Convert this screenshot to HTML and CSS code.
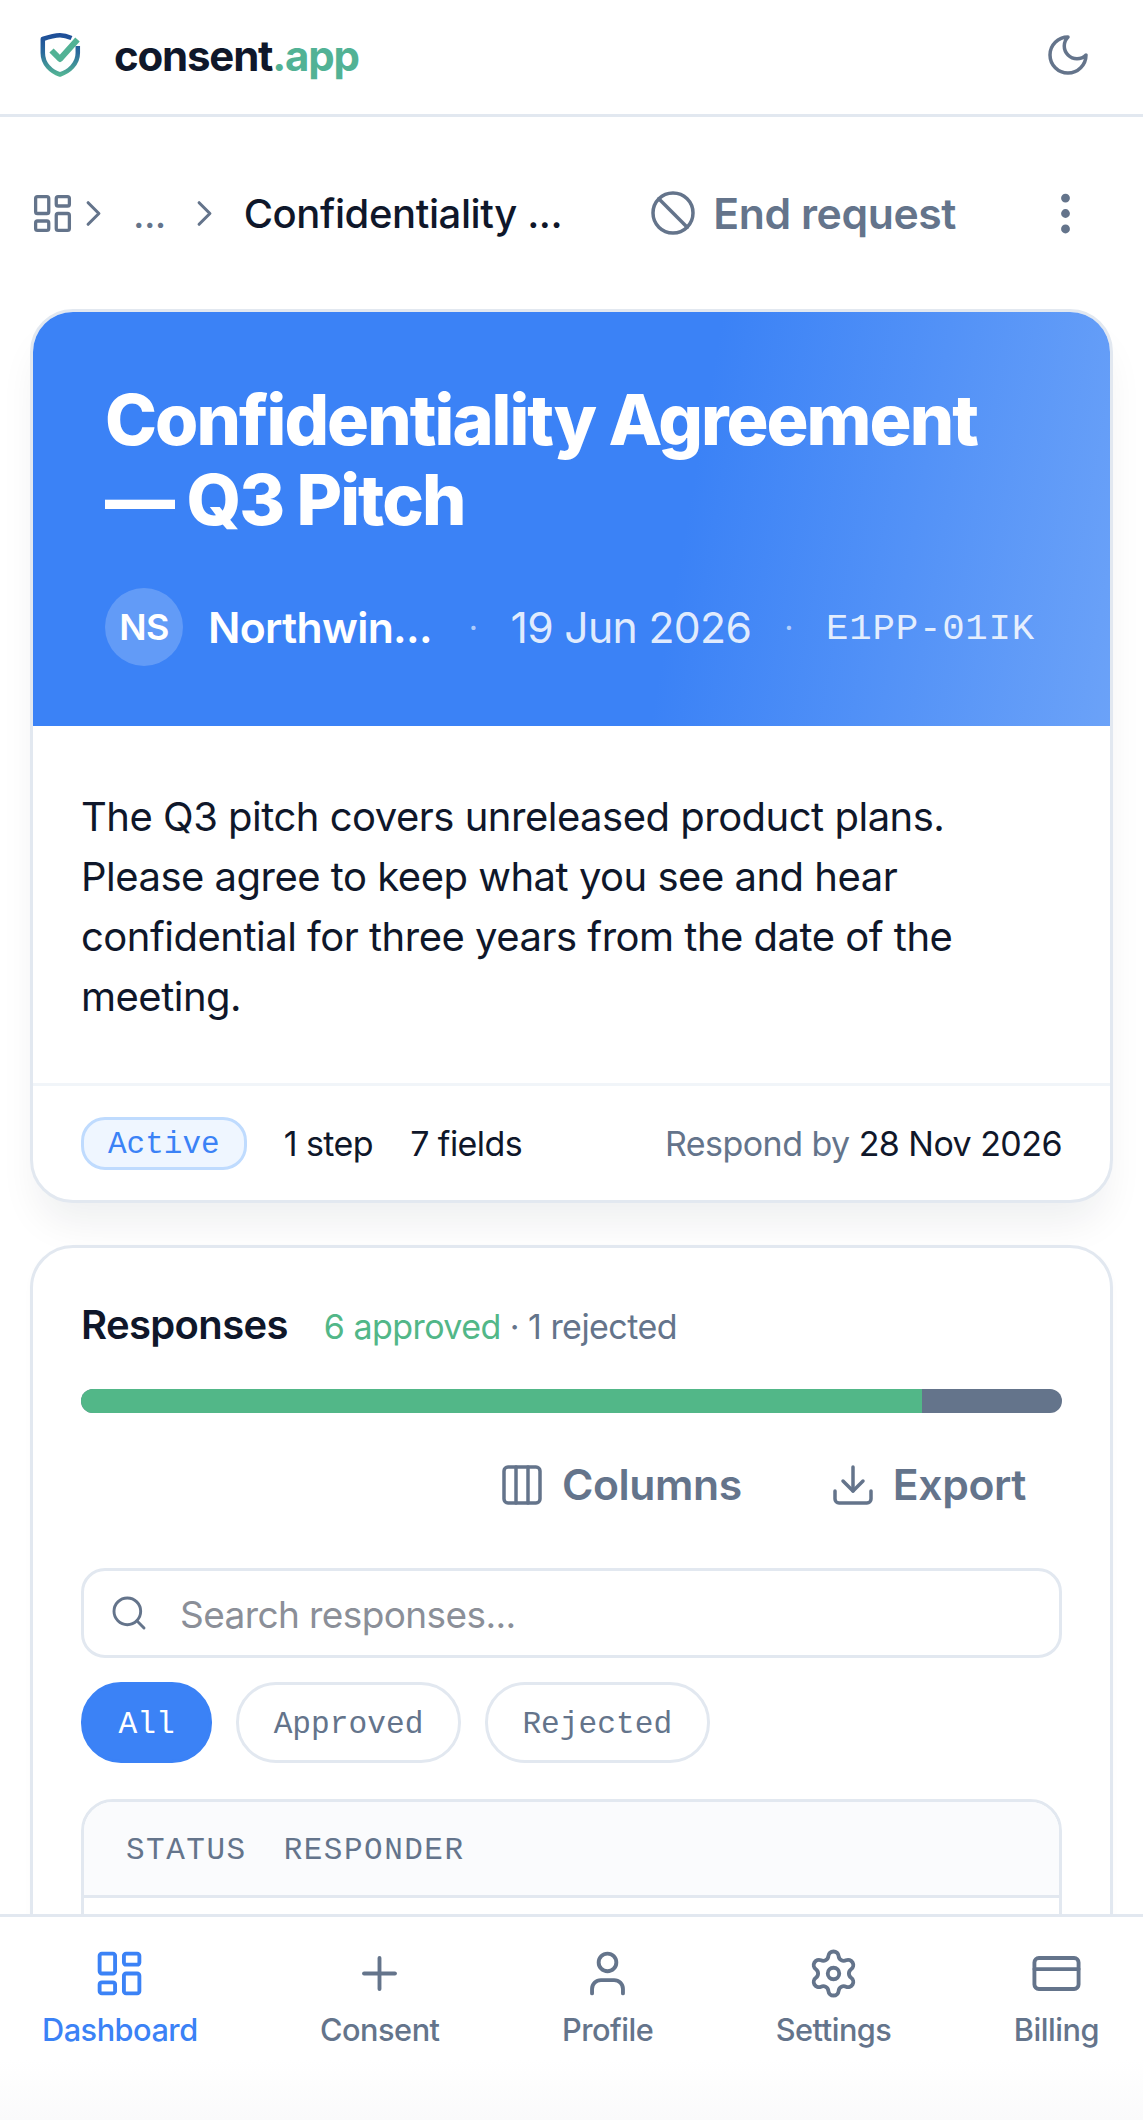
FILE: index.html
```html
<!DOCTYPE html>
<html lang="en">

<head>
  <meta charset="UTF-8">
  <meta name="viewport" content="width=device-width, initial-scale=1.0">
  <title>Confidentiality Agreement — Q3 Pitch</title>
  <link rel="stylesheet" href="styles.css">
</head>

<body>
  <header class="topbar">
    <div class="brand">
      <svg class="brand-logo" viewBox="0 0 48 48" fill="none">
        <defs>
          <linearGradient id="shield" x1="0" y1="0" x2="0" y2="1">
            <stop offset="0" stop-color="#1e4e98" />
            <stop offset="0.45" stop-color="#2a6a9c" />
            <stop offset="1" stop-color="#52b295" />
          </linearGradient>
        </defs>
        <path d="M35.500 7C31 5 27.500 4.200 24 4.200C19 4.200 14 5.500 6.800 8V22C6.800 33 15 40.500 24 43.500C33 40.500 41.800 33 41.800 22V15" stroke="url(#shield)" stroke-width="4.500" stroke-linejoin="round" />
        <path d="M15.500 19.500L24 28L41.500 8.500" stroke="#52b295" stroke-width="6" stroke-linejoin="round" />
      </svg>
      <span class="brand-name">consent<span class="brand-tld">.app</span></span>
    </div>
    <svg class="icon icon-moon" viewBox="0 0 24 24">
      <path d="M12 3a6 6 0 0 0 9 9 9 9 0 1 1-9-9Z" />
    </svg>
  </header>

  <main class="page">
    <div class="toolbar">
      <nav class="crumbs">
        <svg class="icon icon-crumb" viewBox="0 0 24 24">
          <rect x="3" y="3" width="7" height="9" rx="1" />
          <rect x="14" y="3" width="7" height="5" rx="1" />
          <rect x="14" y="12" width="7" height="9" rx="1" />
          <rect x="3" y="16" width="7" height="5" rx="1" />
        </svg>
        <svg class="icon icon-chevron first-chevron" viewBox="0 0 24 24">
          <path d="m9 18 6-6-6-6" />
        </svg>
        <span class="crumb-more">...</span>
        <svg class="icon icon-chevron" viewBox="0 0 24 24">
          <path d="m9 18 6-6-6-6" />
        </svg>
        <span class="crumb-current">Confidentiality ...</span>
      </nav>
      <button class="ghost-btn end-btn">
        <svg class="icon icon-btn" viewBox="0 0 24 24">
          <circle cx="12" cy="12" r="10" />
          <path d="m4.900 4.900 14.200 14.200" />
        </svg>
        End request
      </button>
      <svg class="icon icon-more" viewBox="0 0 24 24">
        <circle cx="12" cy="5" r="1" />
        <circle cx="12" cy="12" r="1" />
        <circle cx="12" cy="19" r="1" />
      </svg>
    </div>

    <section class="card hero-card">
      <div class="hero">
        <h1 class="hero-title">Confidentiality Agreement — Q3 Pitch</h1>
        <div class="hero-meta">
          <span class="avatar">NS</span>
          <span class="org">Northwin...</span>
          <span class="dot">·</span>
          <span class="date">19 Jun 2026</span>
          <span class="dot">·</span>
          <span class="code">E1PP-01IK</span>
        </div>
      </div>
      <p class="intro">The Q3 pitch covers unreleased product plans. Please agree to keep what you see and hear confidential for three years from the date of the meeting.</p>
      <div class="card-foot">
        <span class="badge">Active</span>
        <span class="foot-item">1 step</span>
        <span class="foot-item">7 fields</span>
        <span class="respond">Respond by <span class="respond-date">28 Nov 2026</span></span>
      </div>
    </section>

    <section class="card responses">
      <div class="resp-head">
        <h2 class="resp-title">Responses</h2>
        <span class="resp-count"><span class="approved">6 approved</span> · 1 rejected</span>
      </div>
      <div class="progress">
        <div class="progress-ok"></div>
      </div>
      <div class="resp-actions">
        <button class="ghost-btn">
          <svg class="icon icon-btn" viewBox="0 0 24 24">
            <rect x="3" y="3" width="18" height="18" rx="2" />
            <path d="M9 3v18" />
            <path d="M15 3v18" />
          </svg>
          Columns
        </button>
        <button class="ghost-btn">
          <svg class="icon icon-btn" viewBox="0 0 24 24">
            <path d="M21 15v4a2 2 0 0 1-2 2H5a2 2 0 0 1-2-2v-4" />
            <path d="m7 10 5 5 5-5" />
            <path d="M12 15V3" />
          </svg>
          Export
        </button>
      </div>
      <label class="search">
        <svg class="icon icon-search" viewBox="0 0 24 24">
          <circle cx="11" cy="11" r="8" />
          <path d="m21 21-4.300-4.300" />
        </svg>
        <input class="search-input" type="text" placeholder="Search responses...">
      </label>
      <div class="chips">
        <span class="chip chip-on">All</span>
        <span class="chip">Approved</span>
        <span class="chip">Rejected</span>
      </div>
      <div class="table">
        <div class="table-head">
          <span>STATUS</span>
          <span>RESPONDER</span>
        </div>
        <div class="table-row"></div>
      </div>
    </section>
  </main>

  <nav class="tabbar">
    <a class="tab tab-on">
      <svg class="icon icon-tab" viewBox="0 0 24 24">
        <rect x="3" y="3" width="7" height="9" rx="1" />
        <rect x="14" y="3" width="7" height="5" rx="1" />
        <rect x="14" y="12" width="7" height="9" rx="1" />
        <rect x="3" y="16" width="7" height="5" rx="1" />
      </svg>
      Dashboard
    </a>
    <a class="tab">
      <svg class="icon icon-tab" viewBox="0 0 24 24">
        <path d="M5 12h14" />
        <path d="M12 5v14" />
      </svg>
      Consent
    </a>
    <a class="tab">
      <svg class="icon icon-tab" viewBox="0 0 24 24">
        <path d="M19 21v-2a4 4 0 0 0-4-4H9a4 4 0 0 0-4 4v2" />
        <circle cx="12" cy="7" r="4" />
      </svg>
      Profile
    </a>
    <a class="tab">
      <svg class="icon icon-tab" viewBox="0 0 24 24">
        <path d="M9.671 4.136a2.340 2.340 0 0 1 4.659 0 2.340 2.340 0 0 0 3.319 1.915 2.340 2.340 0 0 1 2.330 4.033 2.340 2.340 0 0 0 0 3.831 2.340 2.340 0 0 1-2.330 4.033 2.340 2.340 0 0 0-3.319 1.915 2.340 2.340 0 0 1-4.659 0 2.340 2.340 0 0 0-3.320-1.915 2.340 2.340 0 0 1-2.330-4.033 2.340 2.340 0 0 0 0-3.831A2.340 2.340 0 0 1 6.350 6.051a2.340 2.340 0 0 0 3.320-1.915" />
        <circle cx="12" cy="12" r="2.600" />
      </svg>
      Settings
    </a>
    <a class="tab">
      <svg class="icon icon-tab" viewBox="0 0 24 24">
        <rect x="2" y="5" width="20" height="14" rx="2" />
        <path d="M2 10h20" />
      </svg>
      Billing
    </a>
  </nav>
</body>

</html>
```

FILE: styles.css
```css
* {
  box-sizing: border-box;
  letter-spacing: -0.016em;
}

body {
  margin: 0;
  height: 2120px;
  overflow: hidden;
  background: #fff;
  color: #0f172a;
  font-family: Inter, "Noto Sans", sans-serif;
}

.icon {
  display: block;
  flex: none;
  fill: none;
  stroke: #64748b;
  stroke-width: 1.75;
  stroke-linecap: round;
  stroke-linejoin: round;
}

/* top bar */
.topbar {
  display: flex;
  align-items: center;
  justify-content: space-between;
  height: 117px;
  padding: 0 51px 4px 36px;
  border-bottom: 3px solid #e2e8f0;
}

.brand {
  display: flex;
  align-items: center;
  gap: 30px;
}

.brand-logo {
  flex: none;
  width: 48px;
  height: 48px;
}

.brand-name {
  font-size: 42px;
  font-weight: 700;
  letter-spacing: -1.200px;
}

.brand-tld {
  color: #52b295;
  letter-spacing: -1.200px;
}

.icon-moon {
  width: 48px;
  height: 48px;
}

/* breadcrumb row */
.page {
  padding: 0 30px;
}

.toolbar {
  display: flex;
  align-items: center;
  height: 192px;
}

.crumbs {
  display: flex;
  align-items: center;
  flex: 1;
}

.icon-crumb {
  width: 45px;
  height: 45px;
}

.icon-chevron {
  width: 43px;
  height: 43px;
}

.first-chevron {
  margin-left: -3px;
}

.crumb-more {
  margin: 0 17px 0 18px;
  color: #64748b;
  font-size: 40px;
}

.crumb-current {
  margin-left: 18px;
  font-size: 40px;
  font-weight: 500;
  letter-spacing: -0.400px;
}

.ghost-btn {
  display: inline-flex;
  align-items: center;
  gap: 16px;
  padding: 0;
  border: 0;
  background: none;
  color: #64748b;
  font-family: inherit;
  font-size: 42.700px;
  font-weight: 600;
  letter-spacing: -0.400px;
}

.icon-btn {
  width: 48px;
  height: 48px;
}

.icon-more {
  width: 53px;
  height: 53px;
  margin-left: 83px;
  margin-right: 21px;
  stroke-width: 2;
}

/* cards */
.card {
  border: 3px solid #e2e8f0;
  border-radius: 43px;
  background: #fff;
}

.hero-card {
  overflow: hidden;
  box-shadow: 0 27px 40px -8px rgba(15, 23, 42, 0.07);
}

.hero {
  height: 414px;
  padding: 68px 72px 0;
  background: linear-gradient(100deg, #3b82f6 60%, #6ba2f8 100%);
  color: #fff;
}

.hero-title {
  margin: 0;
  font-size: 70px;
  font-weight: 800;
  line-height: 80px;
  letter-spacing: -1.950px;
}

.hero-meta {
  display: flex;
  align-items: center;
  margin-top: 48px;
}

.avatar {
  display: flex;
  align-items: center;
  justify-content: center;
  width: 78px;
  height: 78px;
  border-radius: 50%;
  background: rgba(255, 255, 255, 0.2);
  font-size: 36px;
  font-weight: 600;
}

.org {
  margin-left: 25px;
  margin-right: 4px;
  font-size: 42.700px;
  font-weight: 600;
}

.dot {
  margin: 0 33px;
  color: rgba(255, 255, 255, 0.6);
  font-size: 32px;
}

.date {
  color: rgba(255, 255, 255, 0.85);
  font-size: 42.700px;
}

.code {
  padding-top: 3px;
  color: rgba(255, 255, 255, 0.85);
  font-family: "Liberation Mono", monospace;
  font-size: 37.400px;
  letter-spacing: 0.800px;
}

.intro {
  margin: 0;
  padding: 61px 48px 56px;
  border-bottom: 3px solid #f1f5f9;
  font-size: 40px;
  line-height: 60px;
  letter-spacing: -0.500px;
}

.card-foot {
  display: flex;
  align-items: center;
  height: 114px;
  padding: 0 48px;
  font-size: 34px;
}

.badge {
  display: flex;
  align-items: center;
  height: 53px;
  padding: 2px 24px 0;
  border: 3px solid #bfdbfe;
  border-radius: 24px;
  background: #eff6ff;
  color: #3b82f6;
  font-family: "Liberation Mono", monospace;
  font-size: 31px;
  letter-spacing: 0;
}

.foot-item {
  margin-left: 37px;
}

.respond {
  margin-left: auto;
  color: #64748b;
}

.respond-date {
  color: #0f172a;
}

/* responses */
.responses {
  margin-top: 42px;
  padding: 53px 48px 48px;
  box-shadow: 0 3px 8px rgba(15, 23, 42, 0.02);
}

.resp-head {
  display: flex;
  align-items: baseline;
  gap: 36px;
  height: 48px;
}

.resp-title {
  margin: 0;
  font-size: 40px;
  font-weight: 600;
  line-height: 48px;
}

.resp-count {
  color: #64748b;
  font-size: 34px;
}

.approved {
  color: #52b788;
}

.progress {
  height: 24px;
  margin-top: 40px;
  overflow: hidden;
  border-radius: 12px;
  background: #64748b;
}

.progress-ok {
  width: 85.700%;
  height: 100%;
  background: #52b788;
}

.resp-actions {
  display: flex;
  justify-content: flex-end;
  gap: 87px;
  margin-top: 46px;
  padding-right: 36px;
  line-height: 52px;
}

.search {
  display: flex;
  align-items: center;
  gap: 31px;
  height: 90px;
  margin-top: 58px;
  padding: 0 25px;
  border: 3px solid #e2e8f0;
  border-radius: 24px;
}

.icon-search {
  width: 40px;
  height: 40px;
}

.search-input {
  flex: 1;
  padding: 2px 0 0;
  border: 0;
  outline: 0;
  background: none;
  color: #0f172a;
  font-family: inherit;
  font-size: 37px;
}

.search-input::placeholder {
  color: #8b8f98;
}

.chips {
  display: flex;
  gap: 24px;
  margin-top: 24px;
}

.chip {
  display: flex;
  align-items: center;
  height: 81px;
  padding: 4px 34.500px 0;
  border: 3px solid #e2e8f0;
  border-radius: 40px;
  color: #64748b;
  font-family: "Liberation Mono", monospace;
  font-size: 31.200px;
  letter-spacing: 0;
}

.chip-on {
  border-color: #3b82f6;
  background: #3b82f6;
  color: #fff;
}

.table {
  margin-top: 36px;
  overflow: hidden;
  border: 3px solid #e2e8f0;
  border-radius: 32px;
}

.table-head {
  display: flex;
  align-items: center;
  gap: 37px;
  height: 96px;
  padding: 4px 42px 0;
  border-bottom: 3px solid #e2e8f0;
  background: #fafbfd;
  color: #64748b;
  font-family: "Liberation Mono", monospace;
  font-size: 31px;
}

.table-head span {
  letter-spacing: 1.500px;
}

.table-row {
  height: 200px;
}

/* bottom tabs */
.tabbar {
  position: fixed;
  left: 0;
  right: 0;
  bottom: 0;
  display: flex;
  align-items: flex-start;
  justify-content: space-between;
  height: 206px;
  padding: 30px 44px 0 42px;
  border-top: 3px solid #e2e8f0;
  background: linear-gradient(#fff 70%, #fafafb 100%);
}

.tab {
  display: flex;
  flex-direction: column;
  align-items: center;
  gap: 11px;
  color: #64748b;
  font-size: 30.700px;
  font-weight: 500;
}

.tab-on {
  color: #3b82f6;
}

.tab-on .icon {
  stroke: #3b82f6;
}

.icon-tab {
  width: 53px;
  height: 53px;
}
```
